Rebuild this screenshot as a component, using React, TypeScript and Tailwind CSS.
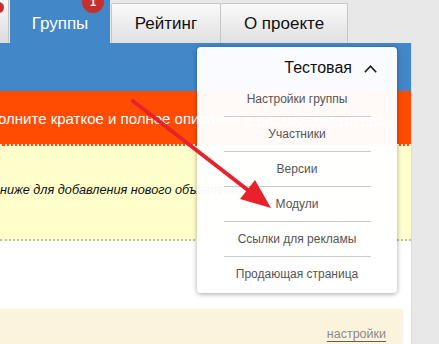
import React from "react";

const items = [
  "Настройки группы",
  "Участники",
  "Версии",
  "Модули",
  "Ссылки для рекламы",
  "Продающая страница",
];

export default function App() {
  return (
    <div className="relative w-[439px] h-[344px] overflow-hidden bg-[#e8e8e8] font-['Liberation_Sans',Arial,sans-serif]">
      <div className="flex h-full">
        <div className="w-[411px] flex flex-col shrink-0">
          {/* tabs */}
          <div className="h-[43px] flex items-end shrink-0">
            <div className="w-[9px] h-[43px] bg-gradient-to-b from-[#f8f8f8] to-[#dcdcdc] border-r border-[#c4c4c4]" />
            <div className="ml-px w-[100px] h-[43px] bg-[#4287c8] text-white text-[17px] flex items-center justify-center pt-[4px]">
              Группы
            </div>
            <div className="ml-px w-[110px] h-[40px] bg-gradient-to-b from-[#fafafa] to-[#e0e0e0] border border-b-0 border-[#c6c6c6] rounded-t-[2px] text-[#111] text-[17px] flex items-center justify-center">
              Рейтинг
            </div>
            <div className="w-[127px] h-[40px] bg-gradient-to-b from-[#fafafa] to-[#e0e0e0] border border-b-0 border-l-0 border-[#c6c6c6] rounded-t-[2px] text-[#111] text-[17px] flex items-center justify-center">
              О проекте
            </div>
          </div>
          {/* blue bar */}
          <div className="h-[48px] bg-[#4287c8] shrink-0" />
          {/* orange */}
          <div className="h-[55px] bg-[#ff4c00] border-b-2 border-dotted border-[#fff6dc] flex items-center pt-[3px] shrink-0 whitespace-nowrap overflow-hidden">
            <span className="ml-[-2px] text-white text-[15px]">
              олните краткое и полное описание{" "}
              <span className="underline">в настройках группы</span>.
            </span>
          </div>
          {/* yellow */}
          <div className="h-[95px] bg-[#ffffcc] border-b-2 border-dotted border-[#bdbdb0] shrink-0 whitespace-nowrap overflow-hidden">
            <div className="mt-[36px] leading-[16px] text-[12.7px] italic text-[#111]">
              ниже для добавления нового объявления.
            </div>
          </div>
          {/* white spacer */}
          <div className="h-[68px] bg-white shrink-0" />
          {/* beige */}
          <div className="flex-1 bg-white">
            <div className="w-[402px] h-full bg-[#fcf3dd] shadow-[1px_0_2px_rgba(0,0,0,0.08)] flex justify-end">
              <span className="mt-[17px] mr-[16px] leading-[16px] text-[12.5px] text-[#8a8a8a] underline decoration-[#6b5f4a] underline-offset-[3px]">
                настройки
              </span>
            </div>
          </div>
        </div>
        <div className="flex-1 border-l border-[#dcdcdc] mt-[43px]" />
      </div>

      {/* badges */}
      <div className="absolute left-[82px] top-[-9px] w-[22px] h-[22px] rounded-full bg-[#c4302b] text-white text-[11px] font-bold flex items-center justify-center">
        1
      </div>
      <div className="absolute left-[-7px] top-[2px] w-[11px] h-[11px] rounded-full bg-[#c4302b]" />

      {/* dropdown */}
      <div className="absolute left-[197px] top-[47px] w-[200px] h-[246px] bg-white/[0.97] rounded-[4px] shadow-[0_1px_5px_rgba(0,0,0,0.35)] flex flex-col">
        <div className="h-[34px] pt-[11px] pr-[20px] flex items-start justify-end gap-[12px]">
          <span className="text-[16px] leading-[20px] text-[#111]">Тестовая</span>
          <svg width="13" height="8" viewBox="0 0 13 8" className="mt-[7px]">
            <polyline points="0.8,7.2 6.5,1.2 12.2,7.2" fill="none" stroke="#1a1a1a" strokeWidth="1.6" />
          </svg>
        </div>
        {items.map((t, i) => (
          <div key={t} className="h-[35px] flex flex-col items-center">
            {i > 0 ? <div className="w-[147px] h-px bg-[#cccccc]" /> : <div className="h-px" />}
            <div className="flex-1 flex items-center text-[12px] text-[#555]">{t}</div>
          </div>
        ))}
      </div>

      {/* red arrow */}
      <svg className="absolute left-0 top-0" width="439" height="344" viewBox="0 0 439 344">
        <line x1="133" y1="101" x2="249" y2="191" stroke="#e8212b" strokeWidth="4" strokeLinecap="round" />
        <polygon points="271,208 240,199 255,180" fill="#e8212b" />
      </svg>
    </div>
  );
}
